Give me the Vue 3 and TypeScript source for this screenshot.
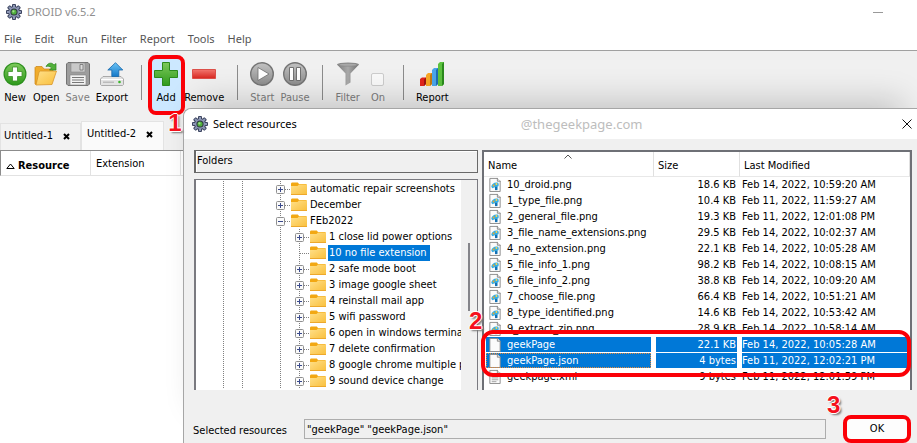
<script setup lang="ts">
import { ref } from 'vue'

interface FolderRow { name: string; level: 1 | 2; mark: '+' | '-' | ''; selected?: boolean }
interface FileRow { name: string; size: string; modified: string; kind: 'png' | 'blank' | 'text'; selected?: boolean; focused?: boolean }

const menus = ['File', 'Edit', 'Run', 'Filter', 'Report', 'Tools', 'Help']

const folders: FolderRow[] = [
  { name: 'automatic repair screenshots', level: 1, mark: '+' },
  { name: 'December', level: 1, mark: '+' },
  { name: 'FEb2022', level: 1, mark: '-' },
  { name: '1 close lid power options', level: 2, mark: '+' },
  { name: '10 no file extension', level: 2, mark: '', selected: true },
  { name: '2 safe mode boot', level: 2, mark: '+' },
  { name: '3 image google sheet', level: 2, mark: '+' },
  { name: '4 reinstall mail app', level: 2, mark: '+' },
  { name: '5 wifi password', level: 2, mark: '+' },
  { name: '6 open in windows terminal', level: 2, mark: '+' },
  { name: '7 delete confirmation', level: 2, mark: '+' },
  { name: '8 google chrome multiple p', level: 2, mark: '+' },
  { name: '9 sound device change', level: 2, mark: '+' },
]

const files: FileRow[] = [
  { name: '10_droid.png', size: '18.6 KB', modified: 'Feb 14, 2022, 10:59:20 AM', kind: 'png' },
  { name: '1_type_file.png', size: '10.4 KB', modified: 'Feb 11, 2022, 11:59:27 AM', kind: 'png' },
  { name: '2_general_file.png', size: '19.3 KB', modified: 'Feb 11, 2022, 12:01:08 PM', kind: 'png' },
  { name: '3_file_name_extensions.png', size: '29.5 KB', modified: 'Feb 14, 2022, 10:02:37 AM', kind: 'png' },
  { name: '4_no_extension.png', size: '22.1 KB', modified: 'Feb 14, 2022, 10:05:28 AM', kind: 'png' },
  { name: '5_file_info_1.png', size: '98.2 KB', modified: 'Feb 14, 2022, 10:08:15 AM', kind: 'png' },
  { name: '6_file_info_2.png', size: '38.8 KB', modified: 'Feb 14, 2022, 10:09:20 AM', kind: 'png' },
  { name: '7_choose_file.png', size: '66.4 KB', modified: 'Feb 14, 2022, 10:51:21 AM', kind: 'png' },
  { name: '8_type_identified.png', size: '14.6 KB', modified: 'Feb 14, 2022, 10:53:42 AM', kind: 'png' },
  { name: '9_extract_zip.png', size: '28.9 KB', modified: 'Feb 14, 2022, 10:58:14 AM', kind: 'png' },
  { name: 'geekPage', size: '22.1 KB', modified: 'Feb 14, 2022, 10:05:28 AM', kind: 'blank', selected: true },
  { name: 'geekPage.json', size: '4 bytes', modified: 'Feb 11, 2022, 12:02:21 PM', kind: 'blank', selected: true, focused: true },
  { name: 'geekpage.xml', size: '9 bytes', modified: 'Feb 11, 2022, 12:01:59 PM', kind: 'text' },
]

const selectedResources = ref('"geekPage" "geekPage.json"')
const filterOn = ref(false)
const teeth = [0, 45, 90, 135, 180, 225, 270, 315]
</script>

<template>
  <div class="window">
    <svg class="defs" aria-hidden="true">
      <defs>
        <symbol id="gear" viewBox="0 0 16 16">
          <g fill="#3d4560">
            <rect v-for="a in teeth" :key="a" x="6" y="0" width="4" height="5" rx="1" :transform="`rotate(${a} 8 8)`" />
            <circle cx="8" cy="8" r="6" />
          </g>
          <g fill="#8d97b5">
            <rect v-for="a in teeth" :key="a" x="7" y="1" width="2" height="4" :transform="`rotate(${a} 8 8)`" />
            <circle cx="8" cy="8" r="5" />
          </g>
          <circle cx="8" cy="8" r="3.6" fill="#2c3440" />
          <circle cx="8" cy="8" r="2.6" fill="#4fae3c" />
          <circle cx="7.4" cy="7.4" r="1.1" fill="#a6e08e" />
        </symbol>
        <linearGradient id="gGreen" x1="0" y1="0" x2="0" y2="1"><stop offset="0" stop-color="#7cc95a" /><stop offset="1" stop-color="#2f9a1c" /></linearGradient>
        <linearGradient id="gRed" x1="0" y1="0" x2="0" y2="1"><stop offset="0" stop-color="#f2776f" /><stop offset="1" stop-color="#d8261f" /></linearGradient>
        <linearGradient id="gGray" x1="0" y1="0" x2="0" y2="1"><stop offset="0" stop-color="#c2c2c2" /><stop offset="1" stop-color="#8c8c8c" /></linearGradient>
        <linearGradient id="gBlue" x1="0" y1="0" x2="0" y2="1"><stop offset="0" stop-color="#6cc4f6" /><stop offset="1" stop-color="#1478c8" /></linearGradient>
        <linearGradient id="gFolder" x1="0" y1="0" x2="1" y2="1"><stop offset="0" stop-color="#ffe08a" /><stop offset="1" stop-color="#f9bf3b" /></linearGradient>
        <linearGradient id="gFunnel" x1="0" y1="0" x2="1" y2="0"><stop offset="0" stop-color="#7d7d7d" /><stop offset=".5" stop-color="#aaa" /><stop offset="1" stop-color="#6f6f6f" /></linearGradient>
      </defs>
    </svg>

    <header class="titlebar">
      <svg class="gear"><use href="#gear" /></svg>
      <span class="app-title">DROID v6.5.2</span>
      <button class="minimize" aria-label="Minimize"></button>
    </header>

    <nav class="menubar">
      <button v-for="m in menus" :key="m">{{ m }}</button>
    </nav>

    <div class="toolbar">
      <button class="tool">
        <svg viewBox="0 0 24 24"><circle cx="12" cy="12" r="11.500" fill="#2c8f1d" /><circle cx="12" cy="12" r="10.400" fill="url(#gGreen)" /><path d="M9.500 5h5v4.500H19v5h-4.500V19h-5v-4.500H5v-5h4.500z" fill="#fff" stroke="#3c8f2a" stroke-width=".8" /></svg>
        <span>New</span>
      </button>
      <button class="tool">
        <svg viewBox="0 0 24 24"><path d="M1 5.500l1-1h6l2 2.500h9v4H6L2 22.500 1 22z" fill="#f0ac2c" stroke="#c98312" stroke-width=".7" /><path d="M5 10l1.500-1H22.500l-4.500 13.500L2 23z" fill="url(#gFolder)" stroke="#d9952a" stroke-width=".8" /><path d="M12 4.500C14 .5 18 .2 20 3l2-1.500V8h-6.500l2-2c-1.500-2-3.500-2-5.500-1.500z" fill="#52b13a" stroke="#2a8220" stroke-width=".7" /></svg>
        <span>Open</span>
      </button>
      <button class="tool" disabled>
        <svg viewBox="0 0 24 24"><path d="M.5 2L2 .5h20L23.500 2v20L22 23.500H2L.5 22z" fill="#9d9d9d" stroke="#737373" /><path d="M5 1h14v9H5z" fill="#c9c9c9" stroke="#8a8a8a" stroke-width=".6" /><path d="M14 2.500h3v5.500h-3z" fill="#ddd" stroke="#6f6f6f" stroke-width=".8" /><path d="M4 13h16v10H4z" fill="#f2f2f2" stroke="#808080" stroke-width=".6" /><path d="M6 15.500h12M6 18h12M6 20.500h12" stroke="#777" /></svg>
        <span>Save</span>
      </button>
      <button class="tool">
        <svg viewBox="0 0 24 24"><path d="M3 14.500h18l2.500 2.500v5.500l-1 1H1.500l-1-1V17z" fill="#e3e3e3" stroke="#999" stroke-width=".8" /><path d="M1 17.500h22" stroke="#fff" /><path d="M3 19.500h11v1.500H3z" fill="#bbb" /><circle cx="19.500" cy="20" r="1.300" fill="#39b52a" /><path d="M15.500.7l7.300 7.300h-4v6.500h-7V8h-4z" fill="url(#gBlue)" stroke="#1767ab" stroke-width=".8" /></svg>
        <span>Export</span>
      </button>
      <i class="sep"></i>
      <button class="tool active">
        <svg viewBox="0 0 24 24"><path d="M8.500.5h7v8h8v7h-8v8h-7v-8h-8v-7h8z" fill="url(#gGreen)" stroke="#2b8a1b" /></svg>
        <span>Add</span>
        <b class="mark mark-add"></b>
        <b class="step step-1">1</b>
      </button>
      <button class="tool">
        <svg viewBox="0 0 24 24"><path d="M.5 7.500h23v9H.5z" fill="url(#gRed)" stroke="#dc5049" /></svg>
        <span>Remove</span>
      </button>
      <i class="sep"></i>
      <button class="tool" disabled>
        <svg viewBox="0 0 24 24"><circle cx="12" cy="12" r="11.300" fill="url(#gGray)" stroke="#757575" stroke-width="1.400" /><path d="M8 5.500L19 12 8 18.500z" fill="#fff" stroke="#6f6f6f" stroke-width=".8" /></svg>
        <span>Start</span>
      </button>
      <button class="tool" disabled>
        <svg viewBox="0 0 24 24"><circle cx="12" cy="12" r="11.300" fill="url(#gGray)" stroke="#757575" stroke-width="1.400" /><path d="M6.500 5.500h4v13h-4zM13.500 5.500h4v13h-4z" fill="#fff" stroke="#666" stroke-width=".9" /></svg>
        <span>Pause</span>
      </button>
      <i class="sep"></i>
      <button class="tool" disabled>
        <svg viewBox="0 0 24 24"><path d="M1 2.500l8.500 9V23.500l5-3v-9l8.500-9z" fill="url(#gFunnel)" /><ellipse cx="12" cy="2.500" rx="11" ry="2" fill="#8b8b8b" /><ellipse cx="12" cy="2.700" rx="8.500" ry="1" fill="#a9a9a9" /></svg>
        <span>Filter</span>
      </button>
      <label class="tool check">
        <input v-model="filterOn" type="checkbox" disabled />
        <span>On</span>
      </label>
      <i class="sep"></i>
      <button class="tool">
        <svg viewBox="0 0 24 24"><path d="M0 17l2-1.500h4V22l-2 2H0z" fill="#e3231b" /><path d="M4 17.500l2-2V22l-2 2z" fill="#9e1410" /><path d="M6 13l2-2h4v11l-2 2H6z" fill="#f9a825" /><path d="M10 13l2-2v11l-2 2z" fill="#c47a10" /><path d="M12 8l2-2h4v16l-2 2h-4z" fill="#4aa5ea" /><path d="M16 8l2-2v16l-2 2z" fill="#1e6db4" /><path d="M18 2l2-2h4v22l-2 2h-4z" fill="#5cc23f" /><path d="M22 2l2-2v22l-2 2z" fill="#2b8a1d" /></svg>
        <span>Report</span>
      </button>
    </div>

    <div class="tabs">
      <button class="tab">Untitled-1 <svg viewBox="0 0 7 7"><path d="M1 1l5 5M6 1L1 6" /></svg></button>
      <button class="tab current">Untitled-2 <svg viewBox="0 0 7 7"><path d="M1 1l5 5M6 1L1 6" /></svg></button>
    </div>

    <div class="results">
      <div class="col col-resource"><svg viewBox="0 0 9 6"><path d="M.8 5.500L4.500 1l3.700 4.500z" fill="none" stroke="#000" /></svg>Resource</div>
      <div class="col">Extension</div>
    </div>

    <section class="dialog" role="dialog" aria-label="Select resources">
      <header class="dialog-title">
        <svg class="gear"><use href="#gear" /></svg>
        <h1>Select resources</h1>
        <span class="watermark">@thegeekpage.com</span>
        <button class="close" aria-label="Close"><svg viewBox="0 0 10 10"><path d="M.5.5l9 9M9.500.5l-9 9" stroke="#111" /></svg></button>
      </header>

      <div class="panes">
        <div class="folders">
          <div class="folders-head">Folders</div>
          <div class="tree">
            <ul>
              <li v-for="f in folders" :key="f.name">
                <svg class="guides" width="57" height="16"><path d="M9.500 0v16M28.500 0v16" /></svg>
                <svg v-if="f.level === 2" class="guides" width="19" height="16"><path d="M9.500 0v16" /></svg>
                <button class="knob" :aria-label="f.name">
                  <svg class="guides" width="19" height="16">
                    <path d="M9.500 0v16M10 8.500h9" />
                    <g v-if="f.mark">
                      <rect class="box" x="5.500" y="4.500" width="8" height="8" rx="1" />
                      <path class="sign" :d="f.mark === '+' ? 'M7 8.500h5M9.500 6v5' : 'M7 8.500h5'" />
                    </g>
                  </svg>
                </button>
                <svg class="folder" viewBox="0 0 16 14"><path d="M0 1.500L.8.500h6L8 2h7.500v5H0z" fill="#f2a813" /><path d="M0 4h6.500L8 2.500h8V13H0z" fill="url(#gFolder)" /><path d="M0 12.500h16" stroke="#eda82b" /></svg>
                <span :class="{ chosen: f.selected }">{{ f.name }}</span>
              </li>
            </ul>
            <div class="scroll"><i></i></div>
          </div>
        </div>

        <div class="files">
          <table>
            <thead>
              <tr>
                <th class="c-name">Name<svg class="sort" viewBox="0 0 8 5"><path d="M.5 4.500L4 1l3.500 3.500" fill="none" stroke="#555" /></svg></th>
                <th class="c-size">Size</th>
                <th class="c-mod">Last Modified</th>
              </tr>
            </thead>
            <tbody>
              <tr v-for="f in files" :key="f.name" :class="{ picked: f.selected, focused: f.focused }">
                <td>
                  <div class="file">
                    <svg viewBox="0 0 12 16">
                      <path d="M.5 1.500h8l3 3v11H.5z" fill="#fbfbfb" stroke="#8a8a8a" />
                      <path d="M8.500 1v3.500H12" fill="#ddd" stroke="#777" stroke-width=".8" />
                      <g v-if="f.kind === 'png'"><path d="M2 10C2.500 7 5.500 5 9.500 6c1 2 .5 4-1 4.500v3H6V11l-3 1z" fill="#35aee6" /><path d="M6 10.500h2.500v3.500H6z" fill="#1470b4" /><circle cx="4.500" cy="9" r="1" fill="#f5a623" /><circle cx="7.500" cy="7.500" r="1" fill="#ffd54a" /></g>
                      <path v-if="f.kind === 'text'" d="M2.500 7.500h7M2.500 9.500h7M2.500 11.500h7M2.500 13.500h5" stroke="#888" stroke-width=".8" />
                    </svg>
                    {{ f.name }}
                  </div>
                </td>
                <td class="size">{{ f.size }}</td>
                <td class="mod">{{ f.modified }}</td>
              </tr>
            </tbody>
          </table>
          <b class="mark mark-files"></b>
          <b class="step step-2">2</b>
        </div>
      </div>

      <footer class="dialog-foot">
        <label for="selected">Selected resources</label>
        <input id="selected" v-model="selectedResources" type="text" readonly />
        <div class="ok-wrap">
          <button class="ok">OK</button>
          <b class="step step-3">3</b>
        </div>
      </footer>
    </section>
  </div>
</template>

<style>
body { margin: 0; overflow: hidden; background: #fff; }
</style>

<style scoped>
* { box-sizing: border-box; }
.window {
  position: relative;
  min-height: 100vh;
  overflow: hidden;
  background: #fff;
  color: #000;
  font-family: "DejaVu Sans Condensed", "Noto Sans", sans-serif;
  font-size: 11px;
  line-height: 16px;
}
button, input { font: inherit; color: inherit; }
button { border: 0; padding: 0; background: none; }
svg { display: block; flex: none; }
.defs { position: absolute; width: 0; height: 0; }
.gear { width: 16px; height: 16px; }

.titlebar { display: flex; align-items: center; gap: 5px; height: 24px; padding: 0 34px 0 6px; font-family: "Noto Sans", sans-serif; color: #8f8f8f; }
.minimize { width: 10px; height: 1px; margin-left: auto; background: #999; }
.menubar { display: flex; gap: 13px; height: 27px; padding: 3px 4px 0; border-bottom: 1px solid #a0a0a0; font-family: "Noto Sans", sans-serif; color: #555; }

.toolbar { display: flex; align-items: flex-start; height: 68px; padding-top: 4px; background: #f0f0f0; }
.tool { position: relative; display: flex; flex-direction: column; align-items: center; gap: 4px; min-width: 30px; padding: 7px 3px 6px; }
.tool > svg { width: 24px; height: 24px; }
.tool:disabled, .check { color: #7d7d7d; }
.tool.active { background: #cce8ff; }
.check input { appearance: none; width: 13px; height: 13px; margin: 11px 0 0; border: 1px solid #ccc; border-radius: 2px; background: #f9f9f9; }
.sep { width: 1px; height: 35px; margin: 10px 9px 0 10px; background: #8c8c8c; }

.tabs { display: flex; align-items: flex-end; height: 31px; background: #f0f0f0; }
.tab { display: flex; align-items: center; gap: 10px; height: 27px; padding: 0 10px 2px 3px; border: 1px solid #e3e3e3; border-bottom: 0; background: #f2f2f2; }
.tab svg { width: 7px; height: 7px; stroke: #000; stroke-width: 2; }
.tab.current { height: 29px; padding: 0 10px 4px 5px; background: #fafafa; }

.results { display: flex; height: 26px; border: solid #8c8c8c; border-width: 1px 0 0 1px; border-bottom: 1px solid #e2e2e2; background: #fff; }
.col { width: 90px; padding: 5px 0 0 5px; border-right: 1px solid #e2e2e2; }
.col-resource { display: flex; align-items: center; gap: 3px; font-weight: bold; }
.col svg { width: 9px; height: 6px; }

.dialog { position: absolute; top: 108px; left: 183px; right: 0; bottom: 0; display: flex; flex-direction: column; border: 1px solid #a6a6a6; border-width: 1px 0 0 1px; border-radius: 8px 0 0 0; background: #f0f0f0; box-shadow: 0 -22px 30px -14px rgba(0, 0, 0, .18); }
.dialog-title { display: flex; align-items: center; height: 30px; padding: 0 5px 0 8px; border-radius: 8px 0 0 0; background: #fff; font-family: "Noto Sans", sans-serif; }
.dialog-title h1 { margin: 0 0 0 5px; font-size: 11px; font-weight: normal; }
.watermark { margin-left: 224px; font-size: 13px; color: #bdbdbd; }
.close { margin-left: auto; }
.close svg { width: 10px; height: 10px; }

.panes { display: flex; gap: 4px; height: 251px; padding: 11px 5px 0 10px; }
.folders { display: flex; flex-direction: column; gap: 6px; width: 284px; }
.folders-head { height: 23px; padding-left: 1px; border: 1px solid #696969; border-left-width: 2px; box-shadow: inset 1px 1px #fff; line-height: 20px; }
.tree { display: flex; flex: 1; min-height: 0; border: solid #7a7a80; border-width: 1px 1px 0 2px; background: #fff; }
.tree ul { flex: 1; min-width: 0; margin: 0; padding: 1px 0 0; overflow: hidden; list-style: none; }
.tree li { display: flex; align-items: center; height: 16px; padding-left: 18px; white-space: nowrap; }
.guides { fill: none; stroke: #808080; stroke-dasharray: 1 1; }
.box { fill: #fafafa; stroke: #8f8f8f; stroke-dasharray: none; }
.sign { stroke: #3a4a8c; stroke-dasharray: none; }
.folder { width: 16px; height: 14px; margin: 0 2px 0 1px; }
.tree span { padding: 0 1px; }
.tree .chosen { padding: 0 3px 0 1px; background: #0078d7; color: #fff; }
.scroll { width: 16px; padding: 63px 7px 0; background: #f0f0f0; }
.scroll i { display: block; width: 2px; height: 68px; background: #85858a; }

.files { position: relative; flex: 1; border: solid #6e7076; border-width: 2px 2px 0; background: #fff; }
table { width: 100%; border-collapse: separate; border-spacing: 0; table-layout: fixed; }
th { height: 25px; padding: 3px 0 0 4px; border-right: 1px solid #e0e0e0; border-bottom: 1px solid #e8e8e8; text-align: left; font-weight: normal; }
.c-name { position: relative; width: 170px; }
.c-size { width: 86px; }
.sort { position: absolute; top: 2px; left: 80px; width: 8px; height: 5px; }
td { height: 16px; padding: 0; border: 0 solid transparent; border-width: 0 3px 1px 2px; line-height: 15px; white-space: nowrap; background-clip: padding-box; }
.file { display: flex; align-items: center; gap: 6px; height: 15px; padding-left: 3px; }
.file svg { width: 12px; height: 15px; }
.size { padding-right: 1px; text-align: right; }
.picked td { background-color: #0078d7; color: #fff; }
.focused .file { outline: 1px dotted #e08a3c; outline-offset: -1px; }

.dialog-foot { display: flex; align-items: center; gap: 17px; margin-top: 25px; padding: 0 6px 0 9px; }
.dialog-foot label { width: 94px; padding-top: 4px; white-space: nowrap; }
.dialog-foot input { flex: 1; min-width: 0; height: 20px; padding: 0 2px; border: 1px solid #adadad; background: #f0f0f0; outline: 0; }
.ok-wrap { position: relative; }
.ok { display: block; width: 68px; height: 28px; border: 4px solid #fb0007; border-radius: 8px; background: #fdfdfd; }

.mark { position: absolute; z-index: 2; border: 4px solid #fb0007; border-radius: 8px; pointer-events: none; }
.mark-add { inset: 0 -4px -3px -3px; }
.mark-files { top: 178px; left: -3px; right: -1px; height: 47px; border-radius: 12px; }
.step { position: absolute; z-index: 3; font: bold 24px/24px "Liberation Sans", sans-serif; color: #f5101c; text-shadow: 1px 0 #fff, -1px 0 #fff, 0 1px #fff, 0 -1px #fff, 2px 2px 2px #777; }
.step-1 { top: 56px; left: 17px; }
.step-2 { top: 157px; left: -15px; }
.step-3 { top: -22px; left: -16px; }
</style>
